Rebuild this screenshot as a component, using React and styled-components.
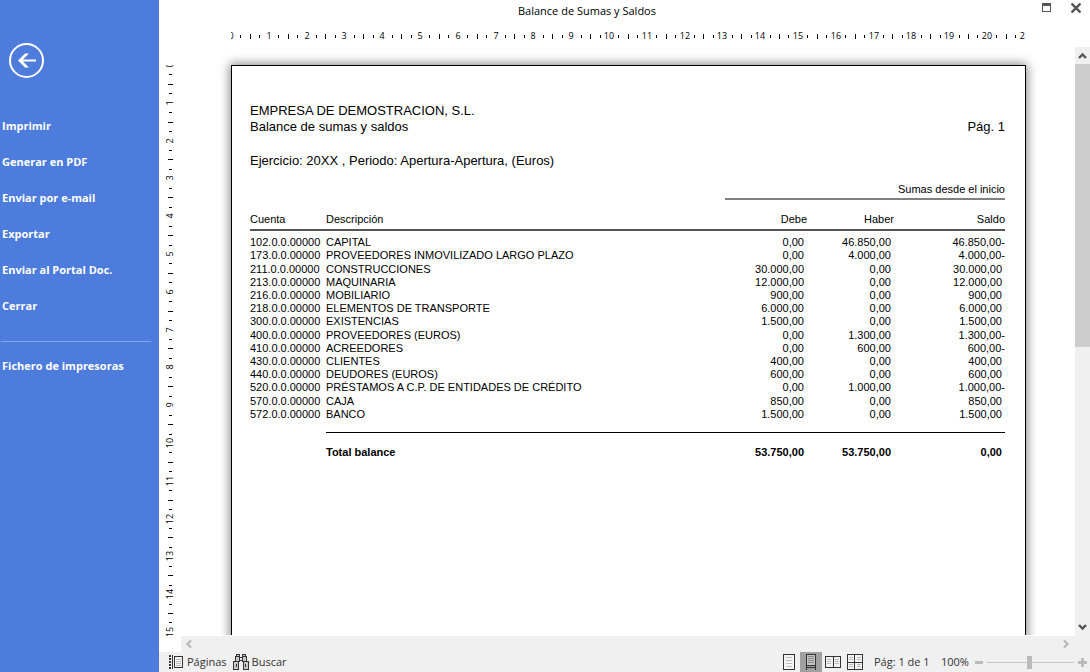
import React, { useState } from 'react';
import styled, { createGlobalStyle } from 'styled-components';

const menu = ['Imprimir', 'Generar en PDF', 'Enviar por e-mail', 'Exportar', 'Enviar al Portal Doc.', 'Cerrar'];

const rows = [
    ['102.0.0.00000', 'CAPITAL', '0,00', '46.850,00', '46.850,00-'],
    ['173.0.0.00000', 'PROVEEDORES INMOVILIZADO LARGO PLAZO', '0,00', '4.000,00', '4.000,00-'],
    ['211.0.0.00000', 'CONSTRUCCIONES', '30.000,00', '0,00', '30.000,00'],
    ['213.0.0.00000', 'MAQUINARIA', '12.000,00', '0,00', '12.000,00'],
    ['216.0.0.00000', 'MOBILIARIO', '900,00', '0,00', '900,00'],
    ['218.0.0.00000', 'ELEMENTOS DE TRANSPORTE', '6.000,00', '0,00', '6.000,00'],
    ['300.0.0.00000', 'EXISTENCIAS', '1.500,00', '0,00', '1.500,00'],
    ['400.0.0.00000', 'PROVEEDORES (EUROS)', '0,00', '1.300,00', '1.300,00-'],
    ['410.0.0.00000', 'ACREEDORES', '0,00', '600,00', '600,00-'],
    ['430.0.0.00000', 'CLIENTES', '400,00', '0,00', '400,00'],
    ['440.0.0.00000', 'DEUDORES (EUROS)', '600,00', '0,00', '600,00'],
    ['520.0.0.00000', 'PRÉSTAMOS A C.P. DE ENTIDADES DE CRÉDITO', '0,00', '1.000,00', '1.000,00-'],
    ['570.0.0.00000', 'CAJA', '850,00', '0,00', '850,00'],
    ['572.0.0.00000', 'BANCO', '1.500,00', '0,00', '1.500,00'],
];

// pixels per centimetre at 96 dpi
const CM = 96 / 2.54;

function Ruler({ length, vertical }) {
    const marks = [];
    for (let i = 0; i <= length * 4; i++) {
        const at = Math.round((i * CM) / 4);
        if (i % 4 === 0) {
            marks.push(
                vertical
                    ? <text key={i} transform={`translate(14 ${at}) rotate(-90)`} textAnchor="middle">{i / 4}</text>
                    : <text key={i} x={at} y="15" textAnchor="middle">{i / 4}</text>
            );
        } else {
            const size = i % 4 === 2 ? 5 : 3;
            const start = i % 4 === 2 ? 0 : 1;
            marks.push(
                vertical
                    ? <rect key={i} x={9 + start} y={at} width={size} height="1" />
                    : <rect key={i} x={at} y={10 + start} width="1" height={size} />
            );
        }
    }
    const px = Math.ceil(length * CM) + 1;
    return (
        <RulerSvg width={vertical ? 22 : px} height={vertical ? px : 23} aria-hidden="true">
            {marks}
        </RulerSvg>
    );
}

const Chevron = ({ d, color }) => (
    <svg width="9" height="9" viewBox="0 0 9 9" fill="none" stroke={color} strokeWidth="2.4">
        <path d={d} />
    </svg>
);

function PagesIcon() {
    return (
        <svg width="15" height="16" viewBox="0 0 15 16" shapeRendering="crispEdges">
            <path d="M1 1v14" stroke="#333" strokeWidth="2" strokeDasharray="2 1" />
            <path d="M3.5 1v14" stroke="#333" />
            <rect x="5.5" y="2.5" width="8" height="11" fill="#f4f4f4" stroke="#333" />
            <path d="M7 5.5h5M7 7.5h5M7 9.5h5M7 11.5h5" stroke="#bbb" />
        </svg>
    );
}

function BinocularsIcon() {
    return (
        <svg width="16" height="16" viewBox="0 0 16 16" fill="#c8c8c8" stroke="#333" shapeRendering="crispEdges">
            <path d="M3.5.5h3v2h-3zM9.5.5h3v2h-3z" />
            <path d="M2.5 2.5h4v5h-4zM9.5 2.5h4v5h-4z" />
            <path d="M6.5 3.5h3v3h-3z" fill="#f0f0f0" />
            <path d="M.5 7.5h5v8h-5zM10.5 7.5h5v8h-5z" />
            <path d="M3.5 10v3M12.5 10v3" />
        </svg>
    );
}

function SinglePageIcon() {
    return (
        <svg width="12" height="16" viewBox="0 0 12 16" shapeRendering="crispEdges">
            <rect x=".5" y=".5" width="11" height="15" fill="#f4f4f4" stroke="#333" />
            <path d="M3 3.5h6M3 6.5h6M3 9.5h6M3 12.5h6" stroke="#bbb" />
        </svg>
    );
}

function ContinuousIcon() {
    return (
        <svg width="12" height="16" viewBox="0 0 12 16" shapeRendering="crispEdges">
            <path d="M1 0h10v12H1z" fill="#c4c4c4" />
            <path d="M3 2.5h6M3 4.5h6M3 6.5h6M3 8.5h6" stroke="#888" />
            <path d="M1.5 0v16M10.5 0v16M1 .5h10M1 11.5h10M1 13.5h10" stroke="#333" fill="none" />
        </svg>
    );
}

function TwoPagesIcon() {
    return (
        <svg width="16" height="16" viewBox="0 0 16 16" shapeRendering="crispEdges">
            <path d="M.5 2.5h15v11H.5zM8.5 2.5v11" fill="#f4f4f4" stroke="#333" />
            <path d="M2 5.5h4M2 7.5h4M2 9.5h4M10 5.5h4M10 7.5h4M10 9.5h4" stroke="#bbb" />
        </svg>
    );
}

function FourPagesIcon() {
    return (
        <svg width="16" height="16" viewBox="0 0 16 16" shapeRendering="crispEdges">
            <path d="M.5.5h15v15H.5z" fill="#f4f4f4" stroke="#333" />
            <path d="M2 3.5h4M2 5.5h4M10 3.5h4M10 5.5h4M2 10.5h4M2 12.5h4M10 10.5h4M10 12.5h4" stroke="#bbb" />
            <path d="M7.5 0v16M0 8.5h16" stroke="#333" />
        </svg>
    );
}

const views = [
    ['Una página', SinglePageIcon],
    ['Continuo', ContinuousIcon],
    ['Dos páginas', TwoPagesIcon],
    ['Cuatro páginas', FourPagesIcon],
];

const Columns = () => (
    <colgroup>
        <Col $w={76} />
        <col />
        <Col $w={82} />
        <Col $w={87} />
        <Col $w={111} />
    </colgroup>
);

function Report() {
    return (
        <Paper>
            <div>EMPRESA DE DEMOSTRACION, S.L.</div>
            <HeadingRow>
                <span>Balance de sumas y saldos</span>
                <span>Pág. 1</span>
            </HeadingRow>
            <Period>Ejercicio: 20XX , Periodo: Apertura-Apertura, (Euros)</Period>
            <Table>
                <Columns />
                <thead>
                    <tr>
                        <td colSpan={2} />
                        <GroupHead colSpan={3} scope="colgroup">Sumas desde el inicio</GroupHead>
                    </tr>
                    <tr>
                        <Head scope="col">Cuenta</Head>
                        <Head scope="col">Descripción</Head>
                        <Head scope="col" $right>Debe</Head>
                        <Head scope="col" $right>Haber</Head>
                        <Head scope="col" $right>Saldo</Head>
                    </tr>
                </thead>
            </Table>
            <BodyTable>
                <Columns />
                <tbody>
                    {rows.map(([account, name, debit, credit, balance]) => (
                        <tr key={account}>
                            <Cell>{account}</Cell>
                            <Cell>{name}</Cell>
                            <Amount>{debit}</Amount>
                            <Amount>{credit}</Amount>
                            <Amount $negative={balance.endsWith('-')}>{balance}</Amount>
                        </tr>
                    ))}
                </tbody>
            </BodyTable>
            <Table>
                <Columns />
                <tbody>
                    <tr>
                        <td />
                        <Total scope="row">Total balance</Total>
                        <TotalAmount>53.750,00</TotalAmount>
                        <TotalAmount>53.750,00</TotalAmount>
                        <TotalAmount>0,00</TotalAmount>
                    </tr>
                </tbody>
            </Table>
        </Paper>
    );
}

function App() {
    const [view, setView] = useState(1);
    return (
        <Window>
            <Global />
            <Sidebar>
                <BackButton aria-label="Volver">
                    <svg width="35" height="35" viewBox="0 0 35 35">
                        <circle cx="17.5" cy="17.5" r="16.5" fill="none" stroke="#fff" strokeWidth="2" />
                        <path d="M9 17.500L16 10.500h4L14 16.500h13v2H14l6 6h-4z" fill="#fff" />
                    </svg>
                </BackButton>
                {menu.map((item) => <MenuItem key={item}>{item}</MenuItem>)}
                <Divider />
                <MenuItem>Fichero de impresoras</MenuItem>
            </Sidebar>
            <Main>
                <TitleBar>
                    <Title>Balance de Sumas y Saldos</Title>
                    <WindowButtons>
                        <IconButton aria-label="Maximizar">
                            <svg width="9" height="9" viewBox="0 0 9 9" shapeRendering="crispEdges">
                                <path d="M.5.5h8v8h-8z" fill="none" stroke="#555" />
                                <path d="M0 0h9v3H0z" fill="#555" />
                            </svg>
                        </IconButton>
                        <IconButton aria-label="Cerrar ventana">
                            <svg width="10" height="10" viewBox="0 0 10 10">
                                <path d="M.5.5l9 9M9.5.5l-9 9" stroke="#555" strokeWidth="2.4" />
                            </svg>
                        </IconButton>
                    </WindowButtons>
                </TitleBar>
                <TopRuler>
                    <RulerClip>
                        <Ruler length={21} />
                    </RulerClip>
                </TopRuler>
                <Workspace>
                    <SideRuler>
                        <RulerClip>
                            <Ruler length={15.25} vertical />
                        </RulerClip>
                    </SideRuler>
                    <Canvas>
                        <Report />
                    </Canvas>
                    <ScrollY>
                        <ScrollButton aria-label="Subir"><Chevron d="M1 7l3.500-3.500L8 7" color="#555" /></ScrollButton>
                        <Track><Thumb /></Track>
                        <ScrollButton aria-label="Bajar"><Chevron d="M1 2l3.500 3.500L8 2" color="#555" /></ScrollButton>
                    </ScrollY>
                    <ScrollX>
                        <ScrollButton aria-label="Izquierda"><Chevron d="M6 .5L2.500 4 6 7.500" color="#bbb" /></ScrollButton>
                        <ScrollButton aria-label="Derecha"><Chevron d="M3 .5L6.500 4 3 7.500" color="#bbb" /></ScrollButton>
                    </ScrollX>
                </Workspace>
                <StatusBar>
                    <ToolButton><PagesIcon /><Label>Páginas</Label></ToolButton>
                    <ToolButton><BinocularsIcon /><Label>Buscar</Label></ToolButton>
                    <Views>
                        {views.map(([label, Icon], i) => (
                            <ViewButton key={label} aria-label={label} $active={view === i} onClick={() => setView(i)}>
                                <Icon />
                            </ViewButton>
                        ))}
                    </Views>
                    <PageInfo>Pág: 1 de 1</PageInfo>
                    <ZoomInfo>100%</ZoomInfo>
                    <IconButton aria-label="Alejar">
                        <svg width="9" height="9" viewBox="0 0 9 9"><path d="M0 3h8v3H0z" fill="#bbb" /></svg>
                    </IconButton>
                    <Slider type="range" min="0" max="200" defaultValue="97" aria-label="Zoom" />
                    <IconButton aria-label="Acercar">
                        <svg width="9" height="9" viewBox="0 0 9 9"><path d="M0 3h3V0h3v3h3v3H6v3H3V6H0z" fill="#bbb" /></svg>
                    </IconButton>
                </StatusBar>
            </Main>
        </Window>
    );
}

export default App;

const Global = createGlobalStyle`
    * {
        box-sizing: border-box;
    }
    body {
        margin: 0;
        font-family: 'Open Sans', 'Noto Sans', sans-serif;
        font-size: 11px;
        color: #333;
    }
    button {
        border: 0;
        padding: 0;
        background: none;
        font: inherit;
        color: inherit;
        cursor: pointer;
    }
`
const Window = styled.div`
    display: flex;
    height: 100vh;
    overflow: hidden;
    background: #fff;
`
const Sidebar = styled.nav`
    flex: 0 0 159px;
    display: flex;
    flex-direction: column;
    background: #4d7cdc;
    padding-top: 43px;
`
const BackButton = styled.button`
    width: 35px;
    height: 35px;
    margin: 0 0 29px 9px;

    svg {
        display: block;
    }
`
const MenuItem = styled.button`
    height: 36px;
    padding: 0 2px;
    text-align: left;
    color: #fff;
    font-size: 11px;
    font-weight: 700;

    &:hover {
        background: #6a93e4;
    }
`
const Divider = styled.hr`
    width: 150px;
    height: 1px;
    margin: 18px 0 5px 1px;
    border: 0;
    background: #7fa3ea;
`
const Main = styled.main`
    flex: 1;
    min-width: 0;
    display: flex;
    flex-direction: column;
`
const TitleBar = styled.header`
    display: flex;
    height: 24px;
`
const Title = styled.h1`
    flex: 1;
    margin: 0;
    text-align: center;
    font-size: 11px;
    line-height: 22px;
    font-weight: 400;
    color: #000;
`
const WindowButtons = styled.div`
    flex: 0 0 75px;
    display: flex;
    justify-content: flex-end;
    align-items: flex-start;
    gap: 20px;
    padding: 3px 9px 0 0;
`
const IconButton = styled.button`
    display: flex;
    align-items: center;
`
const TopRuler = styled.div`
    height: 23px;
    padding: 0 64px 0 72px;
`
const RulerClip = styled.div`
    overflow: hidden;
`
const RulerSvg = styled.svg`
    display: block;
    overflow: hidden;
    font-size: 9px;
    fill: #000;
    shape-rendering: crispEdges;
`
const Workspace = styled.div`
    flex: 1;
    min-height: 0;
    display: grid;
    grid-template-columns: 22px 1fr 15px;
    grid-template-rows: minmax(0, 1fr) 16px;
`
const SideRuler = styled.div`
    padding-top: 18px;
    min-height: 0;
    overflow: hidden;
`
const Canvas = styled.div`
    min-width: 0;
    overflow: hidden;
    padding: 18px 49px 0 50px;
    border-bottom: 1px solid #fff;
`
const ScrollY = styled.div`
    display: flex;
    flex-direction: column;
    background: #f0f0f0;
`
const ScrollX = styled.div`
    grid-column: 2 / 4;
    display: flex;
    justify-content: space-between;
    background: #f0f0f0;
    padding-right: 16px;
`
const ScrollButton = styled.button`
    flex: 0 0 17px;
    display: flex;
    align-items: center;
    justify-content: center;
`
const Track = styled.div`
    flex: 1;
`
const Thumb = styled.div`
    height: 51%;
    background: #cdcdcd;
`
const Paper = styled.article`
    min-height: 1123px;
    padding: 37px 20px 37px 18px;
    background: #fff;
    border: 1px solid #000;
    box-shadow: 0 0 10px 1px rgba(0, 0, 0, 0.5);
    font-family: 'Liberation Sans', Arial, sans-serif;
    font-size: 13px;
    line-height: 16px;
    color: #000;
`
const HeadingRow = styled.div`
    display: flex;
    justify-content: space-between;
`
const Period = styled.div`
    margin: 18px 0 11px;
`
const Table = styled.table`
    width: 100%;
    table-layout: fixed;
    border-collapse: separate;
    border-spacing: 0;
    font-size: 11px;
    line-height: 13px;

    td, th {
        padding: 0;
    }
`
const BodyTable = styled(Table)`
    height: 185px;
    margin: 5px 0 11px;
`
const Col = styled.col`
    width: ${(p) => p.$w}px;
`
const GroupHead = styled.th`
    height: 20px;
    text-align: right;
    vertical-align: middle;
    font-weight: 400;
    border-bottom: 2px solid #808080;
`
const Head = styled.th`
    && {
        padding-bottom: 3px;
    }
    height: 31px;
    font-weight: 400;
    vertical-align: bottom;
    text-align: ${(p) => (p.$right ? 'right' : 'left')};
    border-bottom: 2px solid #555;
`
const Cell = styled.td`
    white-space: nowrap;
`
const Amount = styled.td`
    && {
        padding-right: ${(p) => (p.$negative ? 0 : 3)}px;
        text-align: right;
    }
`
const Total = styled.th`
    height: 40px;
    text-align: left;
    border-top: 1px solid #000;
`
const TotalAmount = styled(Amount)`
    font-weight: 700;
    border-top: 1px solid #000;
`
const StatusBar = styled.footer`
    height: 20px;
    display: flex;
    align-items: center;
    background: #f0f0f0;
    padding: 0 3px 0 10px;
`
const ToolButton = styled.button`
    display: flex;
    align-items: center;
    gap: 3px;
    margin-right: 6px;
`
const Label = styled.span`
    padding-bottom: 2px;
`
const Views = styled.div`
    display: flex;
    margin-left: auto;
    align-self: stretch;
`
const ViewButton = styled.button`
    width: 22px;
    display: flex;
    align-items: center;
    justify-content: center;
    background: ${(p) => (p.$active ? '#a0a0a0' : 'none')};
`
const PageInfo = styled(Label)`
    width: 67px;
    margin-left: 8px;
`
const ZoomInfo = styled(Label)`
    width: 34px;
`
const Slider = styled.input`
    appearance: none;
    width: 87px;
    height: 13px;
    margin: 0 4px 0 3px;
    background: linear-gradient(#c8c8c8, #c8c8c8) center / 100% 1px no-repeat;

    &::-webkit-slider-thumb {
        appearance: none;
        width: 5px;
        height: 13px;
        background: #bbb;
    }
`
